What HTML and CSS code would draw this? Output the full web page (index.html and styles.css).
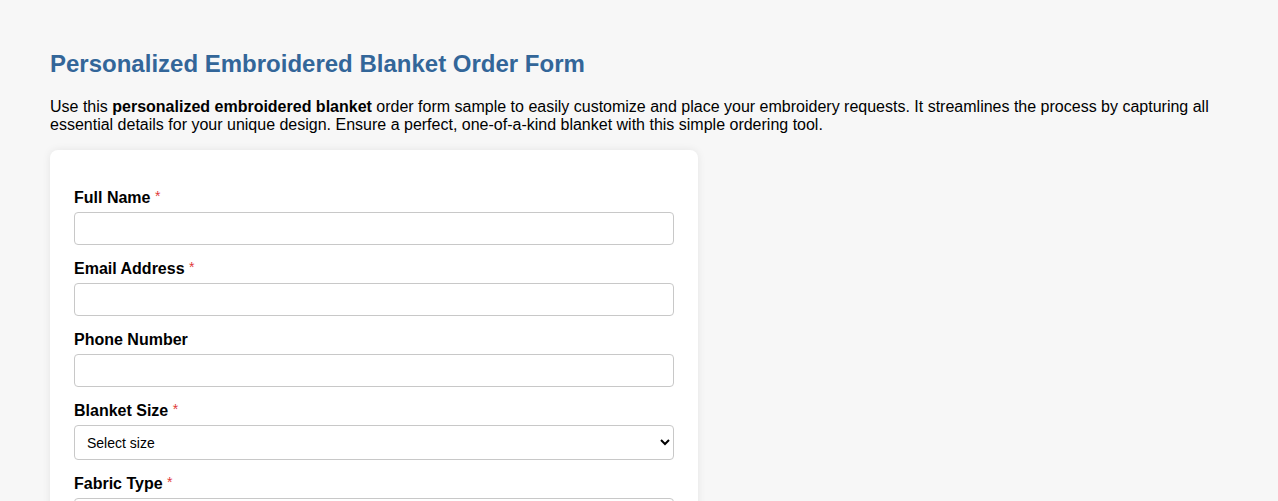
FILE: index.html
```html
<!DOCTYPE html>
<html lang="en">
<head>
<meta charset="utf-8">
<title>Personalized Embroidered Blanket Order Form</title>
<link rel="stylesheet" href="styles.css">
</head>
<body>
<div class="page">
  <h1 class="title">Personalized Embroidered Blanket Order Form</h1>
  <p class="intro">Use this <strong>personalized embroidered blanket</strong> order form sample to easily customize and place your embroidery requests. It streamlines the process by capturing all essential details for your unique design. Ensure a perfect, one-of-a-kind blanket with this simple ordering tool.</p>
  <form class="card">
    <div class="group">
      <label class="label" for="name">Full Name <span class="req">*</span></label>
      <input class="field" id="name" type="text">
    </div>
    <div class="group">
      <label class="label" for="email">Email Address <span class="req">*</span></label>
      <input class="field" id="email" type="email">
    </div>
    <div class="group">
      <label class="label" for="phone">Phone Number</label>
      <input class="field" id="phone" type="tel">
    </div>
    <div class="group">
      <label class="label" for="size">Blanket Size <span class="req">*</span></label>
      <select class="field select" id="size">
        <option>Select size</option>
        <option>Baby</option>
        <option>Throw</option>
        <option>Twin</option>
        <option>Queen</option>
        <option>King</option>
      </select>
    </div>
    <div class="group">
      <label class="label" for="fabric">Fabric Type <span class="req">*</span></label>
      <select class="field select" id="fabric">
        <option>Select fabric</option>
      </select>
    </div>
  </form>
</div>
</body>
</html>
```
FILE: styles.css
```css
html, body {
  margin: 0;
  padding: 0;
  background: #f7f7f7;
  font-family: "Liberation Sans", Arial, sans-serif;
  color: #000;
}
.page {
  padding: 50px 50px 40px;
}
.title {
  margin: 0;
  font-size: 24px;
  line-height: 28px;
  font-weight: bold;
  color: #336699;
}
.intro {
  margin: 20px 0 16px;
  font-size: 16px;
  line-height: 18px;
}
.card {
  width: 600px;
  background: #fff;
  border-radius: 8px;
  box-shadow: 0 0 8px rgba(0, 0, 0, 0.08);
  padding: 39px 24px 24px;
}
.group {
  margin-bottom: 15px;
}
.label {
  display: block;
  font-size: 16px;
  line-height: 18px;
  font-weight: bold;
  margin-bottom: 5px;
}
.req {
  color: #e03a3a;
  font-weight: normal;
  font-size: 14px;
  vertical-align: top;
  line-height: 14px;
}
.field {
  display: block;
  box-sizing: border-box;
  width: 100%;
  height: 33px;
  border: 1px solid #c8c8c8;
  border-radius: 4px;
  padding: 6px 10px;
  font-family: "Liberation Sans", Arial, sans-serif;
  font-size: 14px;
  background: #fff;
}
.select {
  height: 35px;
  padding: 6px 8px;
  color: #000;
}
```
